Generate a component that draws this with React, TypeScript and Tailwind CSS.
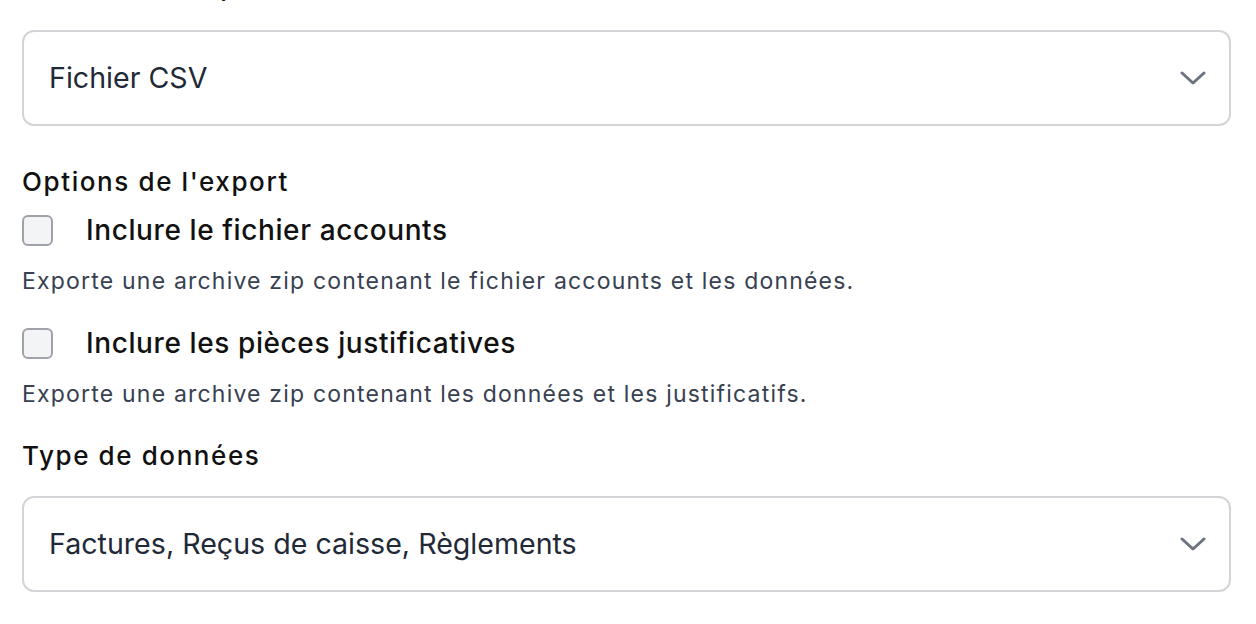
import React from 'react';

function Chevron() {
  return (
    <svg width="26" height="16" viewBox="0 0 26 16" fill="none" className="shrink-0">
      <path d="M2 3 L13 13 L24 3" stroke="#6b7280" strokeWidth="3" strokeLinecap="round" strokeLinejoin="round" />
    </svg>
  );
}

function SelectBox({ value }: { value: string }) {
  return (
    <div className="h-[96px] border-2 border-[#d4d4d8] rounded-[12px] bg-white pl-[25px] pr-[23px] flex items-center justify-between">
      <span className="text-[28.6px] text-[#1f2937]">{value}</span>
      <Chevron />
    </div>
  );
}

function CheckOption({ label, hint }: { label: string; hint: string }) {
  return (
    <div>
      <label className="flex items-center gap-[33px]">
        <span className="w-[31px] h-[31px] rounded-[6px] border-2 border-[#a1a1aa] bg-[#f3f4f6] shrink-0" />
        <span className="text-[28px] leading-[34px] font-medium tracking-[0.6px] text-[#111111]">{label}</span>
      </label>
      <p className="mt-[20px] text-[23px] leading-[28px] tracking-[1.2px] text-[#374151]">{hint}</p>
    </div>
  );
}

export default function App() {
  return (
    <div
      className="w-[1256px] h-[624px] overflow-hidden bg-white"
      style={{ fontFamily: 'Inter, "Noto Sans", sans-serif' }}
    >
      <div className="pl-[22px] pr-[25px]">
        <p className="-mt-[30px] text-[26px] leading-[34px] font-medium tracking-[1.6px] text-[#111111]">Format de l'export</p>

        <div className="mt-[26px]">
          <SelectBox value="Fichier CSV" />
        </div>

        <p className="mt-[40px] text-[26px] leading-[32px] font-medium tracking-[1.6px] text-[#111111]">Options de l'export</p>

        <div className="mt-[15px]">
          <CheckOption
            label="Inclure le fichier accounts"
            hint="Exporte une archive zip contenant le fichier accounts et les données."
          />
        </div>

        <div className="mt-[31px]">
          <CheckOption
            label="Inclure les pièces justificatives"
            hint="Exporte une archive zip contenant les données et les justificatifs."
          />
        </div>

        <p className="mt-[32px] text-[26px] leading-[32px] font-medium tracking-[1.6px] text-[#111111]">Type de données</p>

        <div className="mt-[24px]">
          <SelectBox value="Factures, Reçus de caisse, Règlements" />
        </div>
      </div>
    </div>
  );
}
